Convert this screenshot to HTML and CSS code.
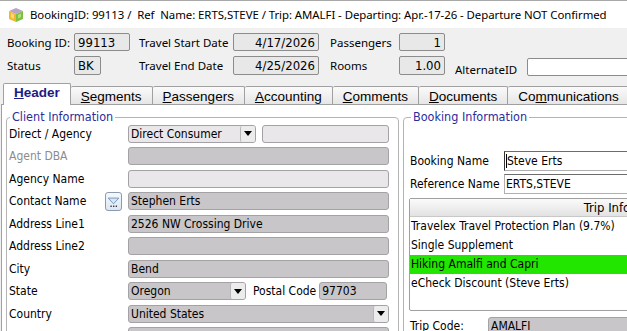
FILE: index.html
```html
<!DOCTYPE html>
<html lang="en">
<head>
    <meta charset="UTF-8">
    <title>Booking 99113</title>
    <link rel="stylesheet" href="styles.css">
</head>
<body>

<div class="titlebar">
    <svg class="app-icon" width="16" height="16" viewBox="0 0 16 16">
        <polygon points="8,1 15,4 8,7 1,4" fill="#b9a3c9"/>
        <polygon points="1,4 8,7 8,15 1,12" fill="#f2b632"/>
        <polygon points="8,7 15,4 15,12 8,15" fill="#7cc142"/>
        <polygon points="3,6 6,7.5 6,12 3,10.5" fill="#f7d977"/>
        <polygon points="10,8 13,6.5 13,10 10,11.5" fill="#b4e07a"/>
    </svg>
    <span class="title-text">BookingID: 99113 /  Ref  Name: ERTS,STEVE / Trip: AMALFI - Departing: Apr.-17-26 - Departure NOT Confirmed</span>
</div>

<div class="summary">
    <label>Booking ID:</label>
    <div><input class="box" style="width:56px" value="99113" readonly></div>
    <label>Travel Start Date</label>
    <div><input class="box num" value="4/17/2026" readonly></div>
    <label>Passengers</label>
    <div><input class="box num short" value="1" readonly></div>
    <span></span><span></span>

    <label>Status</label>
    <div><input class="box" style="width:27px" value="BK" readonly></div>
    <label>Travel End Date</label>
    <div><input class="box num" value="4/25/2026" readonly></div>
    <label>Rooms</label>
    <div><input class="box num short" value="1.00" readonly></div>
    <label class="alt-label">AlternateID</label>
    <div><input class="box alt" value="" readonly></div>
</div>

<div class="tabs">
    <div class="tab active"><u>H</u>eader</div>
    <div class="tab"><u>S</u>egments</div>
    <div class="tab"><u>P</u>assengers</div>
    <div class="tab"><u>A</u>ccounting</div>
    <div class="tab"><u>C</u>omments</div>
    <div class="tab"><u>D</u>ocuments</div>
    <div class="tab">Co<u>m</u>munications</div>
</div>

<div class="page">
    <fieldset class="group client">
        <legend>Client Information</legend>

        <div class="row">
            <label>Direct / Agency</label>
            <div class="combo light" style="width:128px"><span>Direct Consumer</span><b class="drop"></b></div>
            <input class="field light" style="width:127px; margin-left:6px" readonly>
        </div>
        <div class="row">
            <label class="disabled">Agent DBA</label>
            <input class="field" readonly>
        </div>
        <div class="row">
            <label>Agency Name</label>
            <input class="field light" readonly>
        </div>
        <div class="row">
            <label>Contact Name</label>
            <div class="lookup">
                <svg width="17" height="19" viewBox="0 0 17 19">
                    <path d="M2.5 4.5 H14.5 L8.5 11 Z" fill="#d6e6f6" stroke="#6f8fb4" stroke-width="1"/>
                    <rect x="5" y="13" width="1.5" height="1.5" fill="#222"/>
                    <rect x="8" y="13" width="1.5" height="1.5" fill="#222"/>
                    <rect x="11" y="13" width="1.5" height="1.5" fill="#222"/>
                </svg>
            </div>
            <input class="field" value="Stephen Erts" readonly>
        </div>
        <div class="row">
            <label>Address Line1</label>
            <input class="field" value="2526 NW Crossing Drive" readonly>
        </div>
        <div class="row">
            <label>Address Line2</label>
            <input class="field" readonly>
        </div>
        <div class="row">
            <label>City</label>
            <input class="field" value="Bend" readonly>
        </div>
        <div class="row">
            <label>State</label>
            <div class="combo" style="width:118px"><span>Oregon</span><b class="drop"></b></div>
            <label class="inline">Postal Code</label>
            <input class="field" style="width:68px" value="97703" readonly>
        </div>
        <div class="row">
            <label>Country</label>
            <div class="combo"><span>United States</span><b class="drop"></b></div>
        </div>
        <div class="row">
            <label></label>
            <input class="field" readonly>
        </div>
    </fieldset>

    <fieldset class="group booking">
        <legend>Booking Information</legend>

        <div class="brow">
            <label>Booking Name</label>
            <div class="text-in focus"><i class="caret"></i>Steve Erts</div>
        </div>
        <div class="brow">
            <label>Reference Name</label>
            <div class="text-in">ERTS,STEVE</div>
        </div>

        <div class="trip-info">
            <div class="trip-head">Trip Info</div>
            <div class="trip-row">Travelex Travel Protection Plan (9.7%)</div>
            <div class="trip-row">Single Supplement</div>
            <div class="trip-row selected">Hiking Amalfi and Capri</div>
            <div class="trip-row">eCheck Discount (Steve Erts)</div>
        </div>

        <div class="brow code">
            <label>Trip Code:</label>
            <input class="field" value="AMALFI" readonly>
        </div>
    </fieldset>
</div>

</body>
</html>
```

FILE: styles.css
```css
body {
    margin: 0;
    width: 627px;
    height: 331px;
    overflow: hidden;
    background-color: #f0f0f0;
    font-family: "DejaVu Sans Condensed", "DejaVu Sans", sans-serif;
    font-size: 12px;
    color: #000;
}
input {
    font-family: "DejaVu Sans Condensed", "DejaVu Sans", sans-serif;
    font-size: 12px;
    color: #000;
    outline: none;
}

/* window title */
.titlebar {
    height: 28px;
    box-sizing: border-box;
    background-color: #fff;
    border-top: 1px solid #a8a8a8;
    display: flex;
    align-items: center;
    padding-left: 8px;
    gap: 6px;
    font-family: "Noto Sans", sans-serif;
    font-size: 11.4px;
    letter-spacing: -0.05px;
    white-space: pre;
}

/* booking summary */
.summary {
    display: grid;
    grid-template-columns: 67px 65px 94px 97px 69px 56px 72px 1fr;
    grid-template-rows: 18px 19px;
    row-gap: 5px;
    padding: 5px 0 0 7px;
    height: 55px;
    box-sizing: border-box;
    font-family: "Noto Sans", sans-serif;
    font-size: 11.5px;
}
.summary label {
    align-self: center;
}
.summary .alt-label {
    align-self: end;
    margin-bottom: -2px;
}
.box {
    height: 100%;
    width: 86px;
    box-sizing: border-box;
    border: 1px solid #8c8c8c;
    border-radius: 2px;
    background-color: #e8e8e8;
    padding: 0 3px;
    font-size: 13px;
}
.box.num {
    text-align: right;
}
.box.short {
    width: 46px;
}
.box.alt {
    width: 120px;
    height: 18px;
    margin-top: 2px;
    background-color: #fff;
}

/* tabs */
.tabs {
    display: flex;
    align-items: flex-end;
    height: 21px;
    padding-left: 3px;
    font-family: "Liberation Sans", Arial, sans-serif;
    font-size: 13.5px;
}
.tab {
    height: 18px;
    line-height: 19px;
    padding: 0 10px;
    box-sizing: border-box;
    border: 1px solid #a0a0a0;
    border-bottom: none;
    border-left: none;
    border-radius: 2px 2px 0 0;
    background: linear-gradient(#fafafa, #e6e6e6);
}
.tab.active {
    height: 22px;
    line-height: 17px;
    margin-bottom: -1px;
    border-left: 1px solid #a0a0a0;
    background: #fff;
    font-weight: bold;
    color: #1b1b86;
    position: relative;
}

/* tab page */
.page {
    display: flex;
    align-items: flex-start;
    gap: 4px;
    width: 860px;
    height: 240px;
    margin-left: 1px;
    padding: 5px 0 0 4px;
    background-color: #fff;
    border-top: 1px solid #a0a0a0;
    border-left: 1px solid #a0a0a0;
}
.group {
    margin: 0;
    padding: 0 0 0 2px;
    border: 1px solid #b4b4b4;
    border-radius: 4px;
    height: 260px;
    box-sizing: border-box;
}
.group legend {
    padding: 0 2px;
    margin-left: 1px;
    color: #2c2c9c;
    font-size: 12.5px;
    line-height: 14px;
}
.client {
    width: 393px;
}
.booking {
    width: 450px;
    padding-left: 6px;
}

.row {
    display: flex;
    align-items: center;
    height: 19px;
    margin-bottom: 3.55px;
}
.row label {
    width: 119px;
    flex-shrink: 0;
}
.row label.disabled {
    color: #8c8c8c;
}
.row label.inline {
    width: auto;
    margin: 0 3px 0 7px;
}
.lookup {
    width: 17px;
    height: 19px;
    margin: 0 6px 0 -23px;
    box-sizing: border-box;
    border: 1px solid #8a9ab0;
    border-radius: 3px;
    background: linear-gradient(#f6f9fd, #dce6f2);
    display: flex;
}
.field {
    width: 261px;
    height: 18px;
    box-sizing: border-box;
    border: 1px solid #a4a2a4;
    border-radius: 3px;
    background-color: #c8c6c8;
    padding: 0 2px;
}
.field.light {
    background-color: #e9e7e9;
}
.combo {
    width: 261px;
    height: 18px;
    box-sizing: border-box;
    border: 1px solid #a4a2a4;
    border-radius: 3px;
    background-color: #c8c6c8;
    display: flex;
    align-items: center;
    padding-left: 2px;
}
.combo.light {
    background-color: #e9e7e9;
}
.combo span {
    flex: 1;
}
.drop {
    width: 15px;
    height: 16px;
    box-sizing: border-box;
    border-left: 1px solid #b8b8b8;
    border-radius: 2px;
    background-color: #ececec;
    display: flex;
    align-items: center;
    justify-content: center;
}
.drop::after {
    content: "";
    border-top: 5px solid #000;
    border-left: 4px solid transparent;
    border-right: 4px solid transparent;
}

/* booking information */
.brow {
    display: flex;
    align-items: center;
    margin-bottom: 3px;
}
.brow label {
    width: 94px;
    flex-shrink: 0;
}
.booking .brow:first-of-type {
    margin-top: 27px;
}
.text-in {
    width: 200px;
    height: 20px;
    line-height: 19px;
    box-sizing: border-box;
    border: 1px solid #b0b0b0;
    border-top-color: #6c6c6c;
    background-color: #fff;
    padding-left: 1px;
    display: flex;
    align-items: center;
}
.text-in.focus {
    border-left-color: #333;
}
.caret {
    width: 1px;
    height: 14px;
    background-color: #000;
}
.trip-info {
    width: 396px;
    height: 113px;
    box-sizing: border-box;
    margin: 4px 0 0 -1px;
    border: 1px solid #a0a0a0;
    border-radius: 2px;
}
.trip-head {
    height: 17px;
    line-height: 17px;
    text-align: center;
    font-size: 13px;
    background: linear-gradient(#fbfbfb, #e2e2e2);
    border-bottom: 1px solid #c8c8c8;
}
.trip-row {
    height: 19px;
    line-height: 19px;
    padding-left: 1px;
}
.trip-row.selected {
    background-color: #22e600;
}
.brow.code {
    margin-top: 6px;
}
.brow.code label {
    width: 78px;
}
.brow.code .field {
    width: 200px;
    height: 17px;
}
```
